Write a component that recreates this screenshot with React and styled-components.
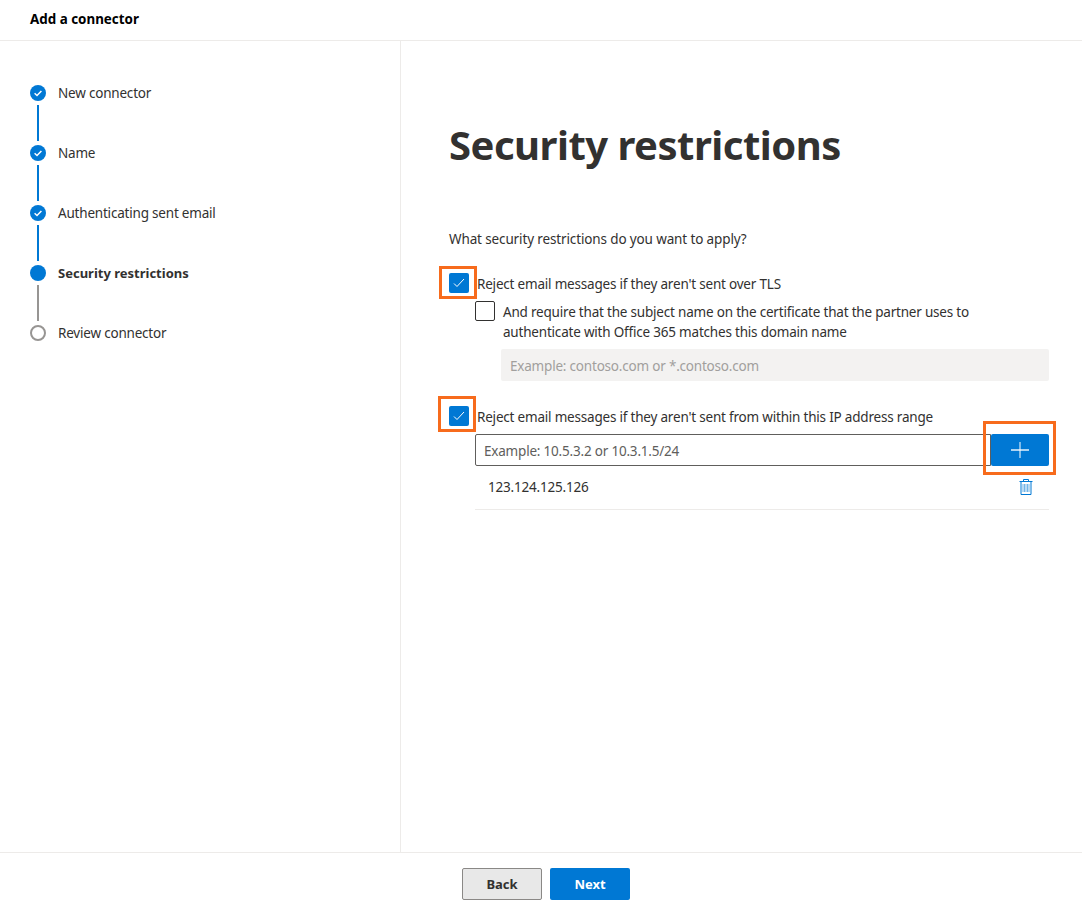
import React from 'react';
import styled, {createGlobalStyle} from 'styled-components';

const GlobalStyle = createGlobalStyle`
  html, body {
    margin: 0;
    padding: 0;
    background: #fff;
  }
  body {
    font-family: "Noto Sans", "Open Sans", sans-serif;
    font-size: 13.5px;
    letter-spacing: -0.2px;
    color: #323130;
  }
`;

const Page = styled.div`
  position: relative;
  width: 1082px;
  height: 904px;
  display: flex;
  flex-direction: column;
  overflow: hidden;
`;

const Header = styled.header`
  height: 41px;
  flex: none;
  box-sizing: border-box;
  display: flex;
  align-items: center;
  padding: 0 0 2px 30px;
  border-bottom: 1px solid #edebe9;
  font-weight: 700;
  font-size: 13.4px;
  letter-spacing: 0;
  color: #000;
`;

const Body = styled.div`
  flex: 1;
  display: flex;
  min-height: 0;
`;

const Sidebar = styled.nav`
  width: 401px;
  flex: none;
  box-sizing: border-box;
  border-right: 1px solid #edebe9;
  padding: 44px 0 0 30px;
`;

const Step = styled.div`
  display: flex;
  flex-direction: column;
`;

const StepHead = styled.div`
  display: flex;
  align-items: center;
  height: 16px;
  gap: 12px;
`;

const Dot = styled.span`
  width: 16px;
  height: 16px;
  flex: none;
  box-sizing: border-box;
  border-radius: 50%;
  display: flex;
  align-items: center;
  justify-content: center;
  background: ${p => (p.$hollow ? '#fff' : '#0078d4')};
  border: ${p => (p.$hollow ? '2px solid #979593' : 'none')};
`;

const StepLabel = styled.span`
  font-size: ${p => (p.$active ? '13px' : '13.5px')};
  line-height: 16px;
  font-weight: ${p => (p.$active ? 700 : 400)};
  letter-spacing: ${p => (p.$active ? '0' : '-0.2px')};
  color: #323130;
`;

const Connector = styled.span`
  display: block;
  width: 2px;
  height: 36px;
  margin: 4px 0 4px 7px;
  background: ${p => (p.$done ? '#0078d4' : '#979593')};
`;

const Main = styled.main`
  flex: 1;
  padding: 0 33px 0 48px;
  min-width: 0;
`;

const Title = styled.h1`
  margin: 76px 0 0;
  font-size: 40px;
  line-height: 56px;
  font-weight: 700;
  color: #323130;
  letter-spacing: -0.5px;
`;

const Question = styled.p`
  margin: 56px 0 0;
  line-height: 20px;
  letter-spacing: -0.13px;
`;

const CheckRow = styled.label`
  display: flex;
  align-items: flex-start;
  gap: 8px;
  line-height: 20px;
  margin-top: ${p => p.$mt || 0}px;
  margin-left: ${p => p.$ml || 0}px;
`;

const Box = styled.span`
  width: 20px;
  height: 20px;
  flex: none;
  box-sizing: border-box;
  border-radius: 2px;
  display: flex;
  align-items: center;
  justify-content: center;
  background: ${p => (p.$checked ? '#0078d4' : '#fff')};
  border: ${p => (p.$checked ? 'none' : '1px solid #323130')};
`;

const RowText = styled.span`
  padding-top: 1px;
`;

const DisabledInput = styled.div`
  height: 32px;
  box-sizing: border-box;
  margin: 7px 0 0 52px;
  padding: 2px 0 0 9px;
  display: flex;
  align-items: center;
  background: #f3f2f1;
  color: #a19f9d;
  border-radius: 2px;
`;

const AddRow = styled.div`
  display: flex;
  height: 32px;
  margin: 7px 0 0 26px;
`;

const TextField = styled.div`
  flex: 1;
  box-sizing: border-box;
  padding: 1px 0 0 8px;
  display: flex;
  align-items: center;
  border: 1px solid #605e5c;
  border-radius: 2px 0 0 2px;
  color: #605e5c;
`;

const AddButton = styled.button`
  width: 58px;
  flex: none;
  border: none;
  border-radius: 2px;
  background: #0078d4;
  padding: 0;
  display: flex;
  align-items: center;
  justify-content: center;
`;

const AddressRow = styled.div`
  height: 44px;
  box-sizing: border-box;
  margin-left: 26px;
  padding: 0 16px 2px 13px;
  display: flex;
  align-items: center;
  justify-content: space-between;
  border-bottom: 1px solid #edebe9;
`;

const Footer = styled.footer`
  height: 52px;
  flex: none;
  box-sizing: border-box;
  border-top: 1px solid #edebe9;
  display: flex;
  justify-content: center;
  gap: 8px;
  padding: 15px 0 0 10px;
`;

const FooterButton = styled.button`
  width: 80px;
  height: 32px;
  box-sizing: border-box;
  border-radius: 2px;
  font-family: inherit;
  font-size: 13px;
  font-weight: 700;
  padding: 0;
  background: ${p => (p.$primary ? '#0078d4' : '#e8e8e8')};
  color: ${p => (p.$primary ? '#fff' : '#323130')};
  border: ${p => (p.$primary ? 'none' : '1px solid #8a8886')};
`;

const Callout = styled.span`
  position: absolute;
  box-sizing: border-box;
  border: 3px solid #f76b1c;
  left: ${p => p.$x}px;
  top: ${p => p.$y}px;
  width: ${p => p.$w}px;
  height: ${p => p.$h}px;
  pointer-events: none;
`;

const StepCheck = () => (
  <svg width="10" height="10" viewBox="0 0 10 10" fill="none">
    <path d="M1.6 5.3 L4 7.5 L8.4 2.9" stroke="#fff" strokeWidth="1.5" />
  </svg>
);

const BoxCheck = () => (
  <svg width="12" height="12" viewBox="0 0 12 12" fill="none">
    <path d="M1 6.5 L4 9.5 L11 2" stroke="#fff" strokeWidth="1" />
  </svg>
);

const Plus = () => (
  <svg width="18" height="16" viewBox="0 0 18 16" fill="none">
    <path d="M0 8 H18" stroke="#fff" strokeWidth="1.6" strokeOpacity="0.85" />
    <path d="M9 0 V16" stroke="#fff" strokeWidth="1" />
  </svg>
);

const Trash = () => (
  <svg width="14" height="16" viewBox="0 0 14 16" fill="none" stroke="#0078d4" strokeWidth="1">
    <path d="M0.5 2.5 H13.5 M4.5 2.5 V0.5 H9.5 V2.5 M2 2.5 V15.5 H12 V2.5" />
    <path d="M4 5 V13 M5.5 5 V13 M7 5 V13 M8.5 5 V13 M10 5 V13" strokeOpacity="0.55" />
  </svg>
);

const steps = [
  {label: 'New connector', state: 'done'},
  {label: 'Name', state: 'done'},
  {label: 'Authenticating sent email', state: 'done'},
  {label: 'Security restrictions', state: 'active'},
  {label: 'Review connector', state: 'todo'},
];

export default function App() {
  return (
    <Page>
      <GlobalStyle />
      <Header>Add a connector</Header>
      <Body>
        <Sidebar>
          {steps.map((step, i) => (
            <Step key={step.label}>
              <StepHead>
                <Dot $hollow={step.state === 'todo'}>
                  {step.state === 'done' && <StepCheck />}
                </Dot>
                <StepLabel $active={step.state === 'active'}>{step.label}</StepLabel>
              </StepHead>
              {i < steps.length - 1 && <Connector $done={step.state === 'done'} />}
            </Step>
          ))}
        </Sidebar>
        <Main>
          <Title>Security restrictions</Title>
          <Question>What security restrictions do you want to apply?</Question>
          <CheckRow $mt={24}>
            <Box $checked><BoxCheck /></Box>
            <RowText>Reject email messages if they aren't sent over TLS</RowText>
          </CheckRow>
          <CheckRow $mt={7} $ml={26}>
            <Box />
            <RowText>
              And require that the subject name on the certificate that the partner uses to
              <br />
              authenticate with Office 365 matches this domain name
            </RowText>
          </CheckRow>
          <DisabledInput>Example: contoso.com or *.contoso.com</DisabledInput>
          <CheckRow $mt={25}>
            <Box $checked><BoxCheck /></Box>
            <RowText>Reject email messages if they aren't sent from within this IP address range</RowText>
          </CheckRow>
          <AddRow>
            <TextField>Example: 10.5.3.2 or 10.3.1.5/24</TextField>
            <AddButton aria-label="Add"><Plus /></AddButton>
          </AddRow>
          <AddressRow>
            <span>123.124.125.126</span>
            <Trash />
          </AddressRow>
        </Main>
      </Body>
      <Footer>
        <FooterButton>Back</FooterButton>
        <FooterButton $primary>Next</FooterButton>
      </Footer>
      <Callout $x={439} $y={266} $w={38} $h={33} />
      <Callout $x={438} $y={396} $w={38} $h={36} />
      <Callout $x={983} $y={421} $w={73} $h={54} />
    </Page>
  );
}
